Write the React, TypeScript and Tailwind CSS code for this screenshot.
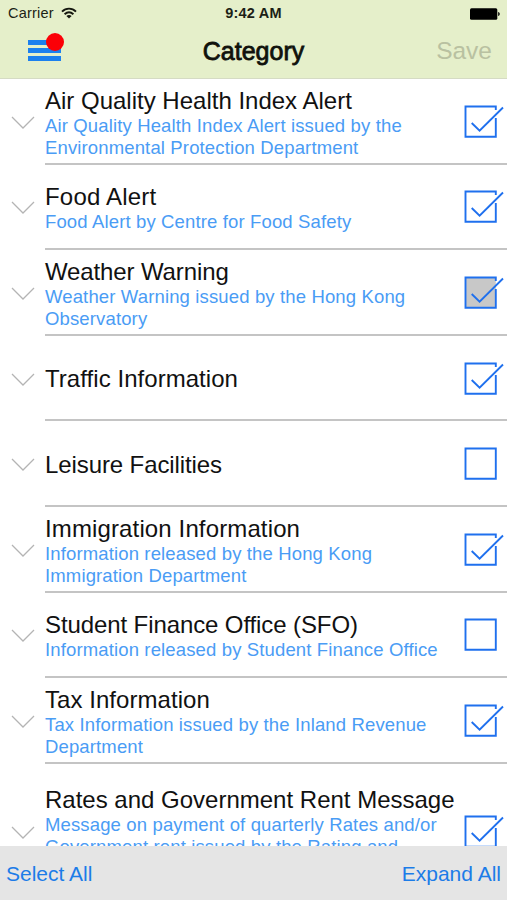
import clsx from 'clsx';

type CheckState = 'on' | 'off' | 'partial';

interface Category {
    title: string;
    tracking?: string;
    lines: string[];
    state: CheckState;
    tall?: boolean;
}

const categories: Category[] = [
    {
        title: 'Air Quality Health Index Alert',
        lines: ['Air Quality Health Index Alert issued by the', 'Environmental Protection Department'],
        state: 'on',
    },
    {
        title: 'Food Alert',
        tracking: 'tracking-[0.2px]',
        lines: ['Food Alert by Centre for Food Safety'],
        state: 'on',
    },
    {
        title: 'Weather Warning',
        tracking: 'tracking-[-0.12px]',
        lines: ['Weather Warning issued by the Hong Kong', 'Observatory'],
        state: 'partial',
    },
    { title: 'Traffic Information', tracking: 'tracking-[0.05px]', lines: [], state: 'on' },
    { title: 'Leisure Facilities', tracking: 'tracking-[-0.1px]', lines: [], state: 'off' },
    {
        title: 'Immigration Information',
        tracking: 'tracking-[0.13px]',
        lines: ['Information released by the Hong Kong', 'Immigration Department'],
        state: 'on',
    },
    {
        title: 'Student Finance Office (SFO)',
        tracking: 'tracking-[-0.1px]',
        lines: ['Information released by Student Finance Office'],
        state: 'off',
    },
    {
        title: 'Tax Information',
        tracking: 'tracking-[0.05px]',
        lines: ['Tax Information issued by the Inland Revenue', 'Department'],
        state: 'on',
    },
    {
        title: 'Rates and Government Rent Message',
        lines: ['Message on payment of quarterly Rates and/or', 'Government rent issued by the Rating and'],
        state: 'on',
        tall: true,
    },
];

function Chevron() {
    return (
        <svg className="ml-[11px] h-3.5 w-6 shrink-0" viewBox="0 0 24 14" fill="none" stroke="#b4b4b4" strokeWidth="1.3">
            <path d="M1 1 L12 12 L23 1" />
        </svg>
    );
}

function Checkbox({ state }: { state: CheckState }) {
    return (
        <svg className="h-[34px] w-[42px] shrink-0" viewBox="0 0 42 34" fill="none" stroke="#1f70ee" strokeWidth="1.9">
            {state === 'off' ? (
                <path d="M1.5 1.5 H31.8 V31.8 H1.5 Z" />
            ) : (
                <>
                    {state === 'partial' && <path d="M1.5 1.5 H31.8 V31.8 H1.5 Z" fill="#c8c8c8" stroke="none" />}
                    <path d="M31.8 5 V1.5 H1.5 V31.8 H31.8 V13" />
                    <path d="M7.7 18 L15.6 25.7 L39 2.5" />
                </>
            )}
        </svg>
    );
}

function CategoryRow({ item }: { item: Category }) {
    return (
        <div className={clsx('flex shrink-0 items-stretch', item.tall ? 'h-[137px]' : 'h-[85.6px]')}>
            <div className="flex w-[45px] shrink-0 items-center pt-0.5">
                <Chevron />
            </div>
            <div className="flex min-w-0 flex-1 items-center border-b-2 border-[#c4c4c4] pt-0.5">
                <div
                    className={clsx(
                        'w-[419px] shrink-0 whitespace-nowrap',
                        item.tall && 'pb-[21.5px]',
                        item.lines.length === 2 && !item.tall && 'pt-0.5'
                    )}
                >
                    <h2 className={clsx('text-[24px] leading-[27px] text-[#111111]', item.tracking)}>{item.title}</h2>
                    {item.lines.length > 0 && (
                        <div className="pt-px text-[18.5px] leading-[21.5px] tracking-[0.14px] text-[#4a9cf5]">
                            {item.lines.map((line) => (
                                <p key={line}>{line}</p>
                            ))}
                        </div>
                    )}
                </div>
                <Checkbox state={item.state} />
            </div>
        </div>
    );
}

function StatusBar() {
    return (
        <div className="grid h-7 grid-cols-3 items-center px-[7px] text-[14.5px] tracking-[0.2px] text-[#1c1f16]">
            <div className="flex items-center gap-[7px] pl-px">
                <span>Carrier</span>
                <svg className="mb-[3px] h-3 w-4" viewBox="0 0 16 12" fill="none" stroke="#15170f" strokeWidth="1.9">
                    <path d="M1 4.6 C5 0.6 11 0.6 15 4.6" />
                    <path d="M3.6 7.3 C6.3 4.7 9.7 4.7 12.4 7.3" />
                    <path d="M8 11.6 L5.4 9 C6.9 7.6 9.1 7.6 10.6 9 Z" fill="#15170f" stroke="none" />
                </svg>
            </div>
            <span className="text-center font-bold whitespace-nowrap">9:42 AM</span>
            <svg className="h-3 w-[30px] justify-self-end" viewBox="0 0 30 12">
                <rect x="0" y="0.3" width="27.3" height="11.4" rx="1.5" fill="#000000" />
                <path d="M28.2 4 C30.2 4.6 30.2 7.4 28.2 8 Z" fill="#000000" />
            </svg>
        </div>
    );
}

function NavBar() {
    return (
        <div className="grid flex-1 grid-cols-3 items-center px-[15px] pb-[3px]">
            <button className="relative mb-[3px] ml-[13px] flex w-[33px] flex-col gap-[3px]">
                <span className="h-[5px] bg-[#1c80ee]" />
                <span className="h-[5px] bg-[#1c80ee]" />
                <span className="h-[5px] bg-[#1c80ee]" />
                <span className="absolute -top-[7px] left-[18px] size-[18px] rounded-full bg-[#fb0007]" />
            </button>
            <h1 className="text-center text-[25px] text-[#10120c] [-webkit-text-stroke:0.8px_#10120c]">Category</h1>
            <button className="justify-self-end text-[24.5px] text-[#b9c1a1]">Save</button>
        </div>
    );
}

export default function App() {
    return (
        <div className="flex h-[900px] w-[507px] flex-col overflow-hidden bg-white font-['Liberation_Sans',sans-serif]">
            <header className="flex h-[79px] shrink-0 flex-col border-b border-[#d5dbc4] bg-[#e5efca]">
                <StatusBar />
                <NavBar />
            </header>
            <main className="flex min-h-0 flex-1 flex-col overflow-hidden">
                {categories.map((item) => (
                    <CategoryRow key={item.title} item={item} />
                ))}
            </main>
            <footer className="flex h-[54px] shrink-0 items-center justify-between bg-[#e5e5e5] px-1.5 pt-0.5 text-[21px] text-[#1c7ce8]">
                <button>Select All</button>
                <button>Expand All</button>
            </footer>
        </div>
    );
}
